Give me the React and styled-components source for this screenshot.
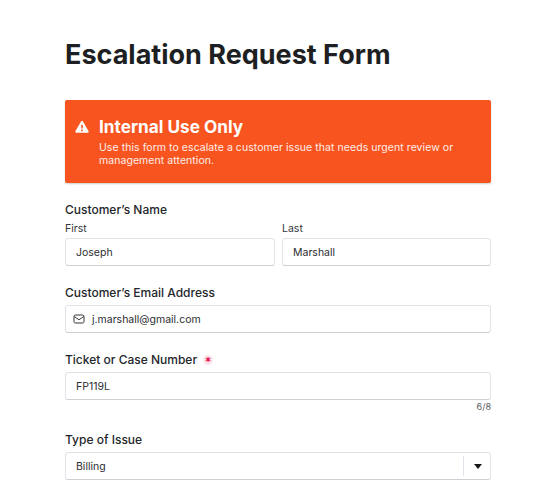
import React from 'react'
import styled, { createGlobalStyle } from 'styled-components'

const GlobalStyle = createGlobalStyle`
  html, body {
    margin: 0;
    height: 500px;
    overflow: hidden;
    background: #fff;
    font-family: Inter, "Noto Sans", sans-serif;
    color: #24262b;
  }
`

const Page = styled.form`
  width: 426px;
  margin-left: 65px;
  padding-top: 38px;
`

const Title = styled.h1`
  margin: 0 0 29px;
  font-size: 27px;
  line-height: 33px;
  font-weight: 700;
  color: #1d1f23;
`

const Banner = styled.div`
  display: flex;
  gap: 10px;
  height: 83px;
  box-sizing: border-box;
  padding: 15px 20px 0 10px;
  margin-bottom: 19px;
  background: #f8541f;
  border-radius: 2px;
  box-shadow: 0 1px 2px rgba(0, 0, 0, 0.2);
  color: #fff;
`

const BannerIcon = styled.svg`
  width: 14px;
  height: 14px;
  margin-top: 5px;
  flex: none;
`

const BannerTitle = styled.div`
  font-size: 17.2px;
  line-height: 24px;
  font-weight: 700;
  margin-bottom: 2px;
`

const BannerText = styled.div`
  font-size: 10.5px;
  line-height: 13px;
  letter-spacing: 0.06px;
  color: #ffeee8;
`

const Group = styled.div`
  margin-bottom: ${(props) => props.$gap || 13}px;
`

const Label = styled.div`
  display: flex;
  align-items: center;
  gap: 6px;
  font-size: 12px;
  line-height: 16px;
  font-weight: 500;
  margin-bottom: 4px;
`

const Required = styled.span`
  display: inline-flex;
  align-items: center;
  justify-content: center;
  width: 10px;
  height: 10px;
  border-radius: 50%;
  background: #fde3ea;
  color: #e0114f;
  font-size: 12px;
  font-weight: 700;
  line-height: 12px;
  padding-top: 3px;
  box-sizing: border-box;
`

const Columns = styled.div`
  display: grid;
  grid-template-columns: 210px 209px;
  gap: 7px;
`

const SubLabel = styled.div`
  font-size: 10.5px;
  line-height: 14px;
  color: #33363b;
  margin-bottom: 2px;
`

const Field = styled.div`
  display: flex;
  align-items: center;
  height: 28px;
  box-sizing: border-box;
  padding-left: ${(props) => props.$inset || 10}px;
  background: #fff;
  border: 1px solid #e2e3ea;
  border-bottom-color: #cfd0d6;
  border-radius: 3px;
  font-size: 10.5px;
  color: #2b2d31;
`

const MailIcon = styled.svg`
  width: 12px;
  height: 12px;
  margin-right: 7px;
  flex: none;
`

const Count = styled.div`
  text-align: right;
  font-size: 9px;
  line-height: 11px;
  color: #55585e;
  margin: 1px 0 20px;
`

const SelectValue = styled.span`
  flex: 1;
`

const Caret = styled.span`
  display: flex;
  align-items: center;
  justify-content: center;
  width: 27px;
  height: 20px;
  padding-left: 1px;
  box-sizing: border-box;
  border-left: 1px solid #e2e3ea;
`

const CaretShape = styled.span`
  width: 0;
  height: 0;
  border-left: 4.5px solid transparent;
  border-right: 4.5px solid transparent;
  border-top: 5px solid #17181b;
`

export default function App() {
  return (
    <Page>
      <GlobalStyle />
      <Title>Escalation Request Form</Title>

      <Banner>
        <BannerIcon viewBox="0 0 24 24" fill="#fff">
          <path fillRule="evenodd" d="M10.3 2.6a2 2 0 0 1 3.4 0l9.4 16.4a2 2 0 0 1-1.7 3H2.6a2 2 0 0 1-1.7-3zM10.7 8v6.5h2.6V8zm1.3 8.2a1.6 1.6 0 1 0 0 3.2 1.6 1.6 0 0 0 0-3.2z" />
        </BannerIcon>
        <div>
          <BannerTitle>Internal Use Only</BannerTitle>
          <BannerText>
            Use this form to escalate a customer issue that needs urgent review or management attention.
          </BannerText>
        </div>
      </Banner>

      <Group $gap={19}>
        <Label>Customer’s Name</Label>
        <Columns>
          <div>
            <SubLabel>First</SubLabel>
            <Field>Joseph</Field>
          </div>
          <div>
            <SubLabel>Last</SubLabel>
            <Field>Marshall</Field>
          </div>
        </Columns>
      </Group>

      <Group $gap={19}>
        <Label>Customer’s Email Address</Label>
        <Field $inset={7}>
          <MailIcon viewBox="0 0 24 24" fill="none" stroke="#33363b" strokeWidth="2" strokeLinejoin="round">
            <rect x="2" y="4" width="20" height="16" rx="3" />
            <path d="M2.5 7l9.5 6.5L21.5 7" />
          </MailIcon>
          j.marshall@gmail.com
        </Field>
      </Group>

      <Group $gap={0}>
        <Label>
          Ticket or Case Number <Required>*</Required>
        </Label>
        <Field>FP119L</Field>
        <Count>6/8</Count>
      </Group>

      <Group>
        <Label>Type of Issue</Label>
        <Field>
          <SelectValue>Billing</SelectValue>
          <Caret>
            <CaretShape />
          </Caret>
        </Field>
      </Group>
    </Page>
  )
}
